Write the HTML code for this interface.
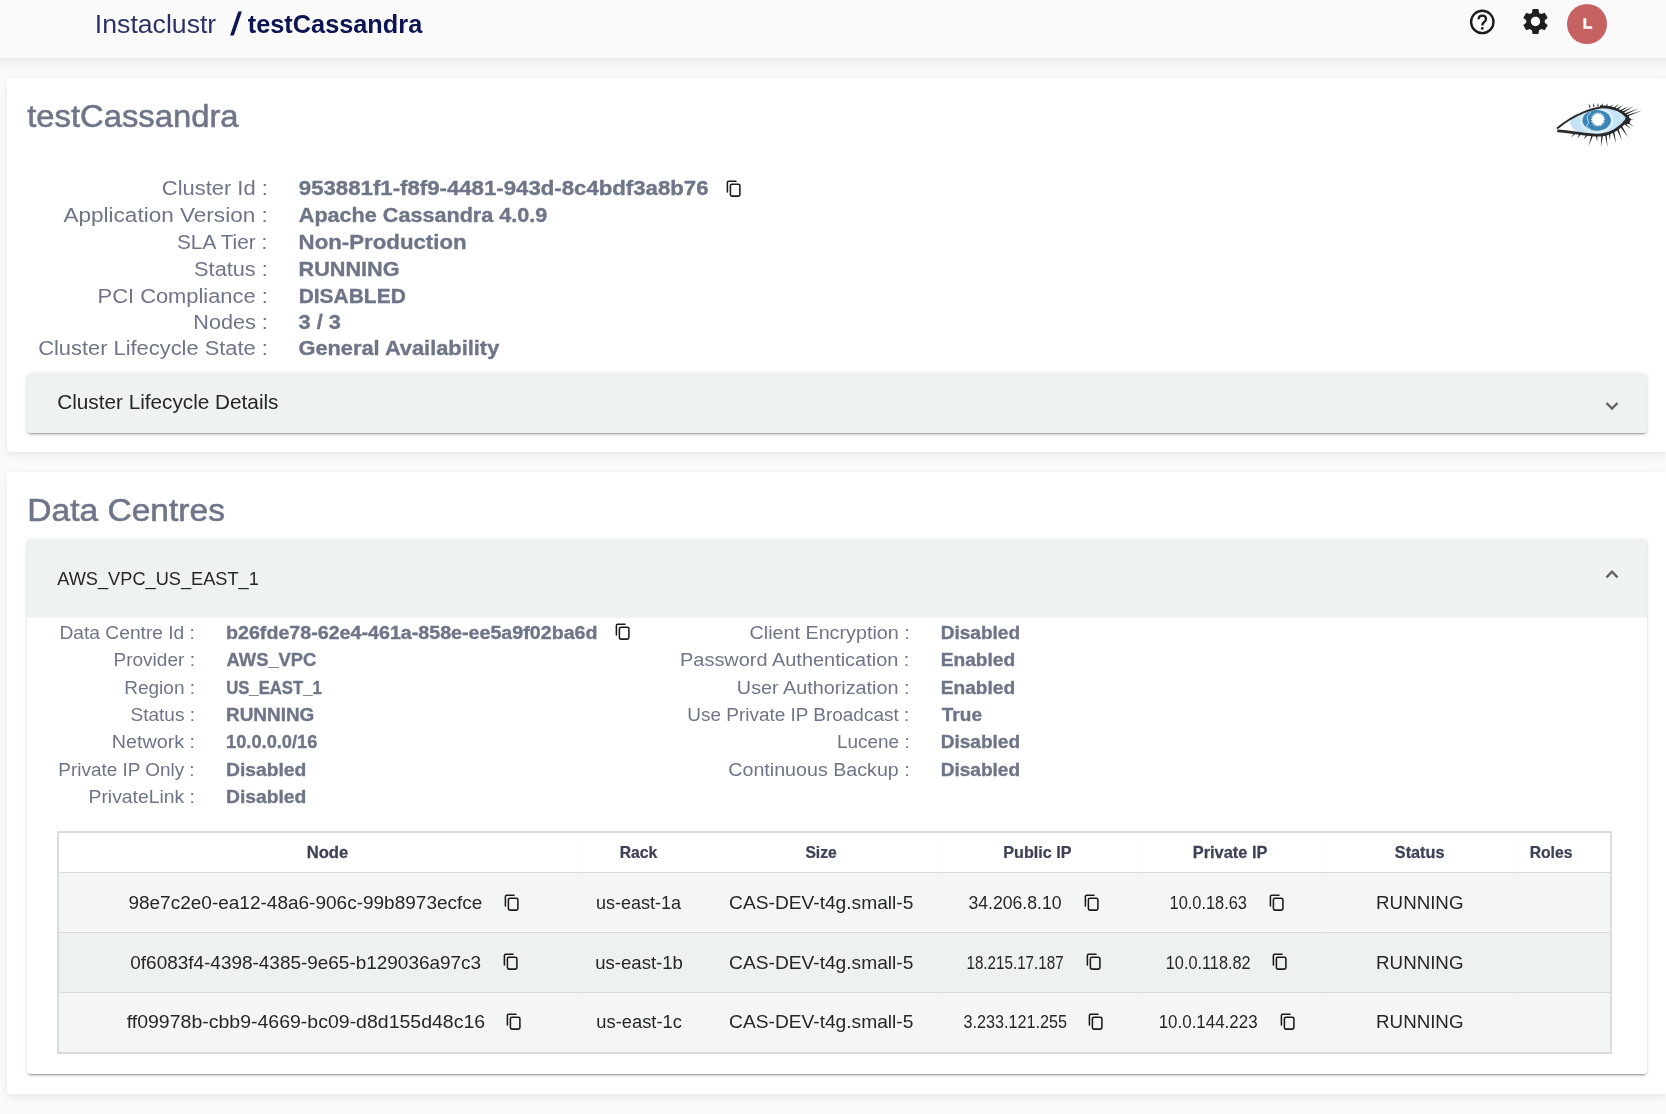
<!DOCTYPE html>
<html><head><meta charset="utf-8"><title>testCassandra</title>
<style>
html,body{margin:0;padding:0;}
body{width:1666px;height:1114px;overflow:hidden;position:relative;background:#fafafa;font-family:"Liberation Sans",sans-serif;}
.txt{position:absolute;left:0;top:0;z-index:2;pointer-events:none;will-change:transform;}
.ic{position:absolute;z-index:2;}
.hdr{position:absolute;left:-30px;top:0;width:1726px;height:58px;background:#fafafa;box-shadow:0 2px 4px rgba(0,0,0,0.05),0 4px 14px rgba(0,0,0,0.05);z-index:1}
.card{position:absolute;left:7px;width:1660px;background:#fff;border-radius:3px;box-shadow:0 2px 6px rgba(0,0,0,0.06),0 4px 14px rgba(0,0,0,0.03);}
.acc{position:absolute;left:27px;width:1620px;border-radius:4px;box-shadow:0 3px 1px -2px rgba(0,0,0,.2),0 2px 2px 0 rgba(0,0,0,.12),0 1px 5px 0 rgba(0,0,0,.1);background:#fff;}
.sum{position:absolute;left:0;top:0;width:1620px;background:#eef3f2;border-radius:4px 4px 0 0;}
.tbl{position:absolute;left:57px;top:831px;width:1551px;height:219px;border:2px solid #dcdcdc;border-bottom:2px solid #d9d9d9;background:#fff;}
.row{position:absolute;left:0;width:1551px;height:59px;border-top:1px solid #dadada;}
.vl{position:absolute;top:0;width:1px;height:219px;background:rgba(0,0,0,0.012);}
</style></head><body>
<div class="hdr">
  <svg style="position:absolute;left:1498px;top:8px" width="29" height="29" viewBox="0 0 29 29">
    <circle cx="14.3" cy="13.9" r="11.2" fill="none" stroke="#1a1a1a" stroke-width="2.35"/>
    <path d="M10.6 11.3 Q10.6 7.6 14.3 7.6 Q18 7.6 18 11 Q18 13 16 14.2 Q14.3 15.3 14.3 17.6" fill="none" stroke="#1a1a1a" stroke-width="2.3"/>
    <circle cx="14.3" cy="20.4" r="1.35" fill="#1a1a1a"/>
  </svg>
  <svg style="position:absolute;left:1550px;top:5.7px" width="31" height="31" viewBox="0 0 24 24">
    <path fill="#1e1e1e" d="M19.14 12.94c.04-.3.06-.61.06-.94 0-.32-.02-.64-.07-.94l2.03-1.58c.18-.14.23-.41.12-.61l-1.92-3.32c-.12-.22-.37-.29-.59-.22l-2.39.96c-.5-.38-1.03-.7-1.62-.94l-.36-2.54c-.04-.24-.24-.41-.48-.41h-3.84c-.24 0-.43.17-.47.41l-.36 2.54c-.59.24-1.13.57-1.62.94l-2.39-.96c-.22-.08-.47 0-.59.22L2.74 8.87c-.12.21-.08.47.12.61l2.03 1.58c-.05.3-.09.63-.09.94s.02.64.07.94l-2.03 1.58c-.18.14-.23.41-.12.61l1.92 3.32c.12.22.37.29.59.22l2.39-.96c.5.38 1.03.7 1.62.94l.36 2.54c.05.24.24.41.48.41h3.84c.24 0 .44-.17.47-.41l.36-2.54c.59-.24 1.13-.56 1.62-.94l2.39.96c.22.08.47 0 .59-.22l1.92-3.32c.12-.22.07-.47-.12-.61l-2.01-1.58zM12 15.6c-1.98 0-3.6-1.62-3.6-3.6s1.62-3.6 3.6-3.6 3.6 1.62 3.6 3.6-1.62 3.6-3.6 3.6z"/>
  </svg>
  <div style="position:absolute;left:1597px;top:3.7px;width:40px;height:40px;border-radius:50%;background:#c76262;"></div>
  <svg style="position:absolute;left:1610px;top:15px" width="16" height="16" viewBox="1580 15 16 16"><path d="M1583.4 18.3 H1586.3 V26.2 H1592.2 V28.8 H1583.4 Z" fill="#fff"/></svg>
</div>

<div class="card" style="top:78px;height:374px;"></div>
<div class="acc" style="top:373px;height:60px;background:#eef3f2;"></div>
<svg style="position:absolute;left:1600px;top:393px" width="24" height="24" viewBox="0 0 24 24"><path d="M6.5 10 L12 15.6 L17.5 10" fill="none" stroke="#636363" stroke-width="2.4"/></svg>

<div class="card" style="top:472px;height:622px;"></div>
<div class="acc" style="top:539px;height:535px;">
  <div class="sum" style="height:79px;"></div>
</div>
<svg style="position:absolute;left:1600px;top:563px" width="24" height="24" viewBox="0 0 24 24"><path d="M6.5 14.3 L12 8.7 L17.5 14.3" fill="none" stroke="#636363" stroke-width="2.4"/></svg>

<div class="tbl">
  <div class="row" style="top:39px;background:#f4f6f5;"></div>
  <div class="row" style="top:99px;background:#edf1f0;"></div>
  <div class="row" style="top:159px;background:#f4f6f5;"></div>
  <div class="vl" style="left:517px"></div>
  <div class="vl" style="left:881px"></div>
  <div class="vl" style="left:1077px"></div>
  <div class="vl" style="left:1267px"></div>
  <div class="vl" style="left:1453px"></div>
</div>

<!-- eye logo -->
<svg style="position:absolute;left:1550px;top:98px;z-index:2" width="100" height="55" viewBox="1550 98 100 55">
  <defs><clipPath id="eo"><path d="M1557.5,129.5 C1572,116 1596,105 1612,108.5 C1620,110.5 1625,114 1628,117.8 C1622,126 1615,132 1605,134 C1590,135.8 1574,132.5 1557.5,129.5 Z"/></clipPath></defs>
  <path d="M1557.5,129.5 C1572,116 1596,105 1612,108.5 C1620,110.5 1625,114 1628,117.8 C1622,126 1615,132 1605,134 C1590,135.8 1574,132.5 1557.5,129.5 Z" fill="#fff"/>
  <g clip-path="url(#eo)">
    <ellipse cx="1600" cy="122" rx="30" ry="15" fill="#c7e4f7"/>
    <ellipse cx="1596.7" cy="120.3" rx="16.8" ry="13" fill="#dbeefa"/>
    <ellipse cx="1596.7" cy="120.3" rx="14.2" ry="10.4" fill="#3b84b7"/>
    <polygon points="1605.60,119.50 1603.35,120.27 1605.29,121.64 1602.91,121.74 1604.39,123.61 1602.08,123.04 1602.98,125.24 1600.92,124.04 1601.16,126.41 1599.52,124.68 1599.08,127.02 1598.00,124.90 1596.92,127.02 1596.48,124.68 1594.84,126.41 1595.08,124.04 1593.02,125.24 1593.92,123.04 1591.61,123.61 1593.09,121.74 1590.71,121.64 1592.65,120.27 1590.40,119.50 1592.65,118.73 1590.71,117.36 1593.09,117.26 1591.61,115.39 1593.92,115.96 1593.02,113.76 1595.08,114.96 1594.84,112.59 1596.48,114.32 1596.92,111.98 1598.00,114.10 1599.08,111.98 1599.52,114.32 1601.16,112.59 1600.92,114.96 1602.98,113.76 1602.08,115.96 1604.39,115.39 1602.91,117.26 1605.29,117.36 1603.35,118.73" fill="#fff"/>
    <path d="M1591,111.5 L1587,117 L1588.5,123 L1586,126.5 L1591,129.5" fill="none" stroke="#fff" stroke-width="0.8" opacity="0.85"/>
  </g>
  <path d="M1557,128.6 C1572,115.5 1596,104.5 1612,108 C1620,110 1625,113.5 1628.5,117.8" fill="none" stroke="#2a2a2a" stroke-width="2"/>
  <path d="M1600,106.5 C1612,106.5 1622,111 1628.5,118" fill="none" stroke="#2a2a2a" stroke-width="2.6"/>
  <path d="M1557.3,130.8 C1572,131.5 1588,135.5 1600,135.2 C1612,134 1621,127.5 1628.5,117.8" fill="none" stroke="#2a2a2a" stroke-width="2.7"/>
  <path d="M1626,116 L1631,119 L1629,124 L1624,124 Z" fill="#2a2a2a"/>
  <path d="M1590.80,107.20 L1588.50,103.50 L1589.20,107.80 Z M1594.82,106.36 L1593.00,103.20 L1593.18,106.84 Z M1598.85,106.20 L1598.00,103.00 L1597.15,106.20 Z M1602.81,106.56 L1603.00,103.20 L1601.19,106.04 Z M1606.73,107.23 L1608.00,103.40 L1605.27,106.37 Z M1610.64,108.16 L1613.00,104.20 L1609.36,107.04 Z M1614.59,109.11 L1618.90,103.80 L1613.41,107.89 Z M1617.51,110.18 L1623.20,104.80 L1616.49,108.82 Z M1620.40,111.75 L1629.00,106.20 L1619.60,110.25 Z M1622.91,113.24 L1633.90,106.20 L1622.09,111.76 Z M1625.34,114.98 L1638.70,108.20 L1624.66,113.42 Z M1626.78,116.80 L1642.10,110.60 L1626.22,115.20 Z M1626.84,119.34 L1634.00,119.80 L1627.16,117.66 Z M1625.49,121.68 L1634.00,127.00 L1626.51,120.32 Z M1623.45,123.65 L1631.00,129.00 L1624.55,122.35 Z M1575.11,131.75 L1571.00,137.50 L1576.49,133.05 Z M1579.81,132.88 L1577.30,138.40 L1581.39,133.92 Z M1586.65,133.82 L1583.50,139.40 L1588.15,134.98 Z M1591.80,133.88 L1588.30,146.60 L1593.60,134.52 Z M1595.55,134.29 L1597.20,141.80 L1597.45,134.11 Z M1601.36,133.70 L1600.80,147.60 L1603.24,133.90 Z M1604.66,133.53 L1607.50,147.10 L1606.54,133.27 Z M1608.55,132.46 L1610.00,140.40 L1610.45,132.34 Z M1612.38,131.62 L1616.20,143.70 L1614.22,131.18 Z M1616.71,129.33 L1622.00,140.80 L1618.49,128.67 Z M1620.70,127.51 L1628.20,137.50 L1622.30,126.49 Z" fill="#2a2a2a"/>
</svg>

<svg style="position:absolute;left:0;top:0;z-index:2" width="260" height="50"><path d="M238.2 11.6 H241.9 L233.8 35.4 H230.1 Z" fill="#0c1452"/></svg>
<svg class="txt" width="1666" height="1114" font-family="Liberation Sans"><text transform="translate(94.85,32.80) scale(1.0237,1)" font-size="26.02" font-weight="400" fill="#0c1452" fill-opacity="0.88">Instaclustr</text>
<text transform="translate(247.80,32.70) scale(0.9732,1)" font-size="26.02" font-weight="700" fill="#0c1452">testCassandra</text>
<text transform="translate(27.20,126.70) scale(1.0598,1)" font-size="30.96" font-weight="400" fill="#6f7588" stroke="#6f7588" stroke-width="0.55">testCassandra</text>
<text transform="translate(161.80,194.80) scale(1.1023,1)" font-size="19.91" font-weight="400" fill="#6f7588">Cluster Id :</text>
<text transform="translate(298.80,194.80) scale(1.1163,1)" font-size="19.91" font-weight="700" fill="#6f7588" stroke="#6f7588" stroke-width="0.35">953881f1-f8f9-4481-943d-8c4bdf3a8b76</text>
<text transform="translate(63.40,221.60) scale(1.1340,1)" font-size="19.91" font-weight="400" fill="#6f7588">Application Version :</text>
<text transform="translate(298.80,221.60) scale(1.0853,1)" font-size="19.91" font-weight="700" fill="#6f7588" stroke="#6f7588" stroke-width="0.35">Apache Cassandra 4.0.9</text>
<text transform="translate(176.90,248.60) scale(1.0495,1)" font-size="19.91" font-weight="400" fill="#6f7588">SLA Tier :</text>
<text transform="translate(298.58,248.60) scale(1.1173,1)" font-size="19.91" font-weight="700" fill="#6f7588" stroke="#6f7588" stroke-width="0.35">Non-Production</text>
<text transform="translate(194.08,275.50) scale(1.0933,1)" font-size="19.91" font-weight="400" fill="#6f7588">Status :</text>
<text transform="translate(298.61,275.50) scale(1.0874,1)" font-size="19.91" font-weight="700" fill="#6f7588" stroke="#6f7588" stroke-width="0.35">RUNNING</text>
<text transform="translate(97.60,302.80) scale(1.0994,1)" font-size="19.91" font-weight="400" fill="#6f7588">PCI Compliance :</text>
<text transform="translate(298.65,302.80) scale(1.0535,1)" font-size="19.91" font-weight="700" fill="#6f7588" stroke="#6f7588" stroke-width="0.35">DISABLED</text>
<text transform="translate(193.35,328.60) scale(1.0861,1)" font-size="19.91" font-weight="400" fill="#6f7588">Nodes :</text>
<text transform="translate(298.60,328.60) scale(1.0915,1)" font-size="19.91" font-weight="700" fill="#6f7588" stroke="#6f7588" stroke-width="0.35">3 / 3</text>
<text transform="translate(38.20,355.30) scale(1.0984,1)" font-size="19.91" font-weight="400" fill="#6f7588">Cluster Lifecycle State :</text>
<text transform="translate(298.44,355.30) scale(1.0962,1)" font-size="19.91" font-weight="700" fill="#6f7588" stroke="#6f7588" stroke-width="0.35">General Availability</text>
<text transform="translate(57.26,408.80) scale(1.0650,1)" font-size="19.48" font-weight="400" fill="#262626">Cluster Lifecycle Details</text>
<text transform="translate(27.30,521.00) scale(1.0995,1)" font-size="30.52" font-weight="400" fill="#6f7588" stroke="#6f7588" stroke-width="0.55">Data Centres</text>
<text transform="translate(57.20,584.80) scale(0.9635,1)" font-size="18.90" font-weight="400" fill="#262626">AWS_VPC_US_EAST_1</text>
<text transform="translate(59.50,638.60) scale(1.1010,1)" font-size="17.44" font-weight="400" fill="#6f7588">Data Centre Id :</text>
<text transform="translate(225.97,638.60) scale(1.1276,1)" font-size="17.44" font-weight="700" fill="#6f7588" stroke="#6f7588" stroke-width="0.35">b26fde78-62e4-461a-858e-ee5a9f02ba6d</text>
<text transform="translate(113.41,666.00) scale(1.0938,1)" font-size="17.44" font-weight="400" fill="#6f7588">Provider :</text>
<text transform="translate(226.62,666.00) scale(1.0523,1)" font-size="17.44" font-weight="700" fill="#6f7588" stroke="#6f7588" stroke-width="0.35">AWS_VPC</text>
<text transform="translate(124.31,693.60) scale(1.0887,1)" font-size="17.44" font-weight="400" fill="#6f7588">Region :</text>
<text transform="translate(226.14,693.60) scale(0.9584,1)" font-size="17.44" font-weight="700" fill="#6f7588" stroke="#6f7588" stroke-width="0.35">US_EAST_1</text>
<text transform="translate(130.54,720.80) scale(1.0906,1)" font-size="17.44" font-weight="400" fill="#6f7588">Status :</text>
<text transform="translate(226.01,720.80) scale(1.0863,1)" font-size="17.44" font-weight="700" fill="#6f7588" stroke="#6f7588" stroke-width="0.35">RUNNING</text>
<text transform="translate(111.67,748.40) scale(1.1324,1)" font-size="17.44" font-weight="400" fill="#6f7588">Network :</text>
<text transform="translate(226.05,748.40) scale(1.0475,1)" font-size="17.44" font-weight="700" fill="#6f7588" stroke="#6f7588" stroke-width="0.35">10.0.0.0/16</text>
<text transform="translate(58.31,775.70) scale(1.0851,1)" font-size="17.44" font-weight="400" fill="#6f7588">Private IP Only :</text>
<text transform="translate(225.99,775.70) scale(1.1066,1)" font-size="17.44" font-weight="700" fill="#6f7588" stroke="#6f7588" stroke-width="0.35">Disabled</text>
<text transform="translate(88.49,803.20) scale(1.1105,1)" font-size="17.44" font-weight="400" fill="#6f7588">PrivateLink :</text>
<text transform="translate(225.99,803.20) scale(1.1066,1)" font-size="17.44" font-weight="700" fill="#6f7588" stroke="#6f7588" stroke-width="0.35">Disabled</text>
<text transform="translate(749.50,638.60) scale(1.1325,1)" font-size="17.44" font-weight="400" fill="#6f7588">Client Encryption :</text>
<text transform="translate(940.71,638.60) scale(1.0931,1)" font-size="17.44" font-weight="700" fill="#6f7588" stroke="#6f7588" stroke-width="0.35">Disabled</text>
<text transform="translate(680.06,666.00) scale(1.1437,1)" font-size="17.44" font-weight="400" fill="#6f7588">Password Authentication :</text>
<text transform="translate(940.70,666.00) scale(1.0977,1)" font-size="17.44" font-weight="700" fill="#6f7588" stroke="#6f7588" stroke-width="0.35">Enabled</text>
<text transform="translate(736.87,693.60) scale(1.1348,1)" font-size="17.44" font-weight="400" fill="#6f7588">User Authorization :</text>
<text transform="translate(940.70,693.60) scale(1.0977,1)" font-size="17.44" font-weight="700" fill="#6f7588" stroke="#6f7588" stroke-width="0.35">Enabled</text>
<text transform="translate(687.31,720.80) scale(1.0876,1)" font-size="17.44" font-weight="400" fill="#6f7588">Use Private IP Broadcast :</text>
<text transform="translate(941.80,720.80) scale(1.0914,1)" font-size="17.44" font-weight="700" fill="#6f7588" stroke="#6f7588" stroke-width="0.35">True</text>
<text transform="translate(837.01,748.40) scale(1.0868,1)" font-size="17.44" font-weight="400" fill="#6f7588">Lucene :</text>
<text transform="translate(940.71,748.40) scale(1.0931,1)" font-size="17.44" font-weight="700" fill="#6f7588" stroke="#6f7588" stroke-width="0.35">Disabled</text>
<text transform="translate(728.30,775.70) scale(1.1276,1)" font-size="17.44" font-weight="400" fill="#6f7588">Continuous Backup :</text>
<text transform="translate(940.71,775.70) scale(1.0931,1)" font-size="17.44" font-weight="700" fill="#6f7588" stroke="#6f7588" stroke-width="0.35">Disabled</text>
<text transform="translate(306.68,857.90) scale(1.0223,1)" font-size="16.28" font-weight="700" fill="#3e4257" stroke="#3e4257" stroke-width="0.25">Node</text>
<text transform="translate(619.63,857.90) scale(0.9681,1)" font-size="16.28" font-weight="700" fill="#3e4257" stroke="#3e4257" stroke-width="0.25">Rack</text>
<text transform="translate(805.40,857.90) scale(0.9630,1)" font-size="16.28" font-weight="700" fill="#3e4257" stroke="#3e4257" stroke-width="0.25">Size</text>
<text transform="translate(1003.33,857.90) scale(0.9920,1)" font-size="16.28" font-weight="700" fill="#3e4257" stroke="#3e4257" stroke-width="0.25">Public IP</text>
<text transform="translate(1192.69,857.90) scale(1.0086,1)" font-size="16.28" font-weight="700" fill="#3e4257" stroke="#3e4257" stroke-width="0.25">Private IP</text>
<text transform="translate(1394.80,857.90) scale(0.9987,1)" font-size="16.28" font-weight="700" fill="#3e4257" stroke="#3e4257" stroke-width="0.25">Status</text>
<text transform="translate(1529.63,857.90) scale(0.9665,1)" font-size="16.28" font-weight="700" fill="#3e4257" stroke="#3e4257" stroke-width="0.25">Roles</text>
<text transform="translate(128.40,908.80) scale(1.0226,1)" font-size="18.60" font-weight="400" fill="#262626">98e7c2e0-ea12-48a6-906c-99b8973ecfce</text>
<text transform="translate(595.93,908.80) scale(0.9679,1)" font-size="18.60" font-weight="400" fill="#262626">us-east-1a</text>
<text transform="translate(729.10,908.80) scale(1.0319,1)" font-size="18.60" font-weight="400" fill="#262626">CAS-DEV-t4g.small-5</text>
<text transform="translate(968.40,908.80) scale(0.9487,1)" font-size="18.60" font-weight="400" fill="#262626">34.206.8.10</text>
<text transform="translate(1169.52,908.80) scale(0.8807,1)" font-size="18.60" font-weight="400" fill="#262626">10.0.18.63</text>
<text transform="translate(1376.09,908.80) scale(1.0070,1)" font-size="18.60" font-weight="400" fill="#262626">RUNNING</text>
<text transform="translate(130.30,968.70) scale(1.0194,1)" font-size="18.60" font-weight="400" fill="#262626">0f6083f4-4398-4385-9e65-b129036a97c3</text>
<text transform="translate(595.20,968.70) scale(0.9988,1)" font-size="18.60" font-weight="400" fill="#262626">us-east-1b</text>
<text transform="translate(729.10,968.70) scale(1.0319,1)" font-size="18.60" font-weight="400" fill="#262626">CAS-DEV-t4g.small-5</text>
<text transform="translate(966.48,968.70) scale(0.8174,1)" font-size="18.60" font-weight="400" fill="#262626">18.215.17.187</text>
<text transform="translate(1165.82,968.70) scale(0.8754,1)" font-size="18.60" font-weight="400" fill="#262626">10.0.118.82</text>
<text transform="translate(1376.09,968.70) scale(1.0070,1)" font-size="18.60" font-weight="400" fill="#262626">RUNNING</text>
<text transform="translate(126.70,1028.20) scale(1.0488,1)" font-size="18.60" font-weight="400" fill="#262626">ff09978b-cbb9-4669-bc09-d8d155d48c16</text>
<text transform="translate(596.31,1028.20) scale(0.9859,1)" font-size="18.60" font-weight="400" fill="#262626">us-east-1c</text>
<text transform="translate(729.10,1028.20) scale(1.0319,1)" font-size="18.60" font-weight="400" fill="#262626">CAS-DEV-t4g.small-5</text>
<text transform="translate(963.44,1028.20) scale(0.8709,1)" font-size="18.60" font-weight="400" fill="#262626">3.233.121.255</text>
<text transform="translate(1158.69,1028.20) scale(0.9112,1)" font-size="18.60" font-weight="400" fill="#262626">10.0.144.223</text>
<text transform="translate(1376.09,1028.20) scale(1.0070,1)" font-size="18.60" font-weight="400" fill="#262626">RUNNING</text></svg>
<svg class="ic" style="left:726.00px;top:180.40px" width="16" height="18" viewBox="0 0 16 18"><path d="M1.4 12 V2.6 Q1.4 1.3 2.7 1.3 H10" fill="none" stroke="#1a1a1a" stroke-width="1.55" stroke-linecap="round"/><rect x="4.4" y="4.3" width="9.5" height="11.8" rx="1.5" fill="none" stroke="#1a1a1a" stroke-width="1.55"/></svg>
<svg class="ic" style="left:614.80px;top:623.20px" width="16" height="18" viewBox="0 0 16 18"><path d="M1.4 12 V2.6 Q1.4 1.3 2.7 1.3 H10" fill="none" stroke="#1a1a1a" stroke-width="1.55" stroke-linecap="round"/><rect x="4.4" y="4.3" width="9.5" height="11.8" rx="1.5" fill="none" stroke="#1a1a1a" stroke-width="1.55"/></svg>
<svg class="ic" style="left:503.90px;top:893.80px" width="16" height="18" viewBox="0 0 16 18"><path d="M1.4 12 V2.6 Q1.4 1.3 2.7 1.3 H10" fill="none" stroke="#1a1a1a" stroke-width="1.55" stroke-linecap="round"/><rect x="4.4" y="4.3" width="9.5" height="11.8" rx="1.5" fill="none" stroke="#1a1a1a" stroke-width="1.55"/></svg>
<svg class="ic" style="left:1084.00px;top:893.80px" width="16" height="18" viewBox="0 0 16 18"><path d="M1.4 12 V2.6 Q1.4 1.3 2.7 1.3 H10" fill="none" stroke="#1a1a1a" stroke-width="1.55" stroke-linecap="round"/><rect x="4.4" y="4.3" width="9.5" height="11.8" rx="1.5" fill="none" stroke="#1a1a1a" stroke-width="1.55"/></svg>
<svg class="ic" style="left:1268.80px;top:893.80px" width="16" height="18" viewBox="0 0 16 18"><path d="M1.4 12 V2.6 Q1.4 1.3 2.7 1.3 H10" fill="none" stroke="#1a1a1a" stroke-width="1.55" stroke-linecap="round"/><rect x="4.4" y="4.3" width="9.5" height="11.8" rx="1.5" fill="none" stroke="#1a1a1a" stroke-width="1.55"/></svg>
<svg class="ic" style="left:502.60px;top:953.30px" width="16" height="18" viewBox="0 0 16 18"><path d="M1.4 12 V2.6 Q1.4 1.3 2.7 1.3 H10" fill="none" stroke="#1a1a1a" stroke-width="1.55" stroke-linecap="round"/><rect x="4.4" y="4.3" width="9.5" height="11.8" rx="1.5" fill="none" stroke="#1a1a1a" stroke-width="1.55"/></svg>
<svg class="ic" style="left:1085.80px;top:953.30px" width="16" height="18" viewBox="0 0 16 18"><path d="M1.4 12 V2.6 Q1.4 1.3 2.7 1.3 H10" fill="none" stroke="#1a1a1a" stroke-width="1.55" stroke-linecap="round"/><rect x="4.4" y="4.3" width="9.5" height="11.8" rx="1.5" fill="none" stroke="#1a1a1a" stroke-width="1.55"/></svg>
<svg class="ic" style="left:1272.00px;top:953.30px" width="16" height="18" viewBox="0 0 16 18"><path d="M1.4 12 V2.6 Q1.4 1.3 2.7 1.3 H10" fill="none" stroke="#1a1a1a" stroke-width="1.55" stroke-linecap="round"/><rect x="4.4" y="4.3" width="9.5" height="11.8" rx="1.5" fill="none" stroke="#1a1a1a" stroke-width="1.55"/></svg>
<svg class="ic" style="left:506.00px;top:1013.30px" width="16" height="18" viewBox="0 0 16 18"><path d="M1.4 12 V2.6 Q1.4 1.3 2.7 1.3 H10" fill="none" stroke="#1a1a1a" stroke-width="1.55" stroke-linecap="round"/><rect x="4.4" y="4.3" width="9.5" height="11.8" rx="1.5" fill="none" stroke="#1a1a1a" stroke-width="1.55"/></svg>
<svg class="ic" style="left:1088.40px;top:1013.30px" width="16" height="18" viewBox="0 0 16 18"><path d="M1.4 12 V2.6 Q1.4 1.3 2.7 1.3 H10" fill="none" stroke="#1a1a1a" stroke-width="1.55" stroke-linecap="round"/><rect x="4.4" y="4.3" width="9.5" height="11.8" rx="1.5" fill="none" stroke="#1a1a1a" stroke-width="1.55"/></svg>
<svg class="ic" style="left:1279.60px;top:1013.30px" width="16" height="18" viewBox="0 0 16 18"><path d="M1.4 12 V2.6 Q1.4 1.3 2.7 1.3 H10" fill="none" stroke="#1a1a1a" stroke-width="1.55" stroke-linecap="round"/><rect x="4.4" y="4.3" width="9.5" height="11.8" rx="1.5" fill="none" stroke="#1a1a1a" stroke-width="1.55"/></svg>
</body></html>
